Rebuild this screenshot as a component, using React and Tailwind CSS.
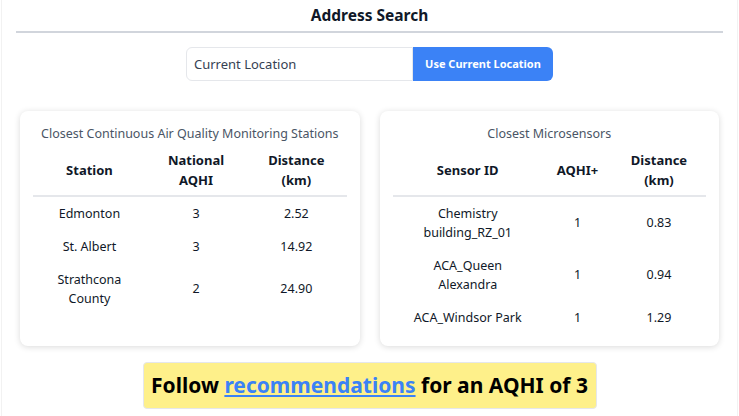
const stations = [
  { name: "Edmonton", aqhi: "3", dist: "2.52" },
  { name: "St. Albert", aqhi: "3", dist: "14.92" },
  { name: "Strathcona County", aqhi: "2", dist: "24.90" },
];

const sensors = [
  { name: "Chemistry building_RZ_01", aqhi: "1", dist: "0.83" },
  { name: "ACA_Queen Alexandra", aqhi: "1", dist: "0.94" },
  { name: "ACA_Windsor Park", aqhi: "1", dist: "1.29" },
];

function DataCard({ title, heads, rows, widths }) {
  return (
    <div className="bg-white rounded-lg shadow-[0_1px_6px_rgba(0,0,0,0.15)] px-[13px] pt-[14px] pb-3">
      <h3 className="text-center text-[12.5px] text-gray-600 mb-[2px]">{title}</h3>
      <table className="w-full table-fixed text-[12.5px] text-gray-900">
        <colgroup>
          {widths.map((w, i) => (
            <col key={i} style={{ width: w }} />
          ))}
        </colgroup>
        <thead>
          <tr className="border-b-2 border-gray-200">
            {heads.map((h, i) => (
              <th key={i} className="font-bold text-[13px] leading-5 pt-1 pb-[5px] px-2">
                {h}
              </th>
            ))}
          </tr>
        </thead>
        <tbody>
          {rows.map((r) => (
            <tr key={r.name}>
              <td className="text-center leading-[19px] py-[7px] px-4">{r.name}</td>
              <td className="text-center leading-[19px] py-[7px]">{r.aqhi}</td>
              <td className="text-center leading-[19px] py-[7px]">{r.dist}</td>
            </tr>
          ))}
        </tbody>
      </table>
    </div>
  );
}

export default function App() {
  return (
    <div
      className="min-h-[416px] bg-white ml-[1px] w-[737px] border-x border-[#f2f2f2]"
      style={{ fontFamily: '"Noto Sans", "Open Sans", sans-serif' }}
    >
      <div className="mx-[14px] pt-[3px] border-b-2 border-gray-300 pb-[4px]">
        <h1 className="text-center text-[15.5px] font-bold text-gray-900 leading-6">Address Search</h1>
      </div>

      <div className="flex justify-center mt-[14px]">
        <input
          readOnly
          value="Current Location"
          className="w-[227px] h-[34px] border border-gray-200 rounded-l-md px-[7px] text-[13px] text-gray-700 outline-none"
        />
        <button className="w-[140px] h-[34px] bg-[#3b82f6] text-white text-[11px] font-bold rounded-r-md">
          Use Current Location
        </button>
      </div>

      <div className="grid grid-cols-2 gap-5 mx-[18px] mt-[30px]">
        <DataCard
          title="Closest Continuous Air Quality Monitoring Stations"
          heads={["Station", "National AQHI", "Distance (km)"]}
          rows={stations}
          widths={["36%", "32%", "32%"]}
        />
        <DataCard
          title="Closest Microsensors"
          heads={["Sensor ID", "AQHI+", "Distance (km)"]}
          rows={sensors}
          widths={["48%", "22%", "30%"]}
        />
      </div>

      <div className="flex justify-center mt-4">
        <div className="bg-[#fef08a] border border-gray-200 rounded-sm w-[454px] h-[47px] flex items-center justify-center text-[21px] font-bold text-black">
          <span>
            Follow{" "}
            <a href="#" className="text-[#3b82f6] underline">
              recommendations
            </a>{" "}
            for an AQHI of 3
          </span>
        </div>
      </div>
    </div>
  );
}
